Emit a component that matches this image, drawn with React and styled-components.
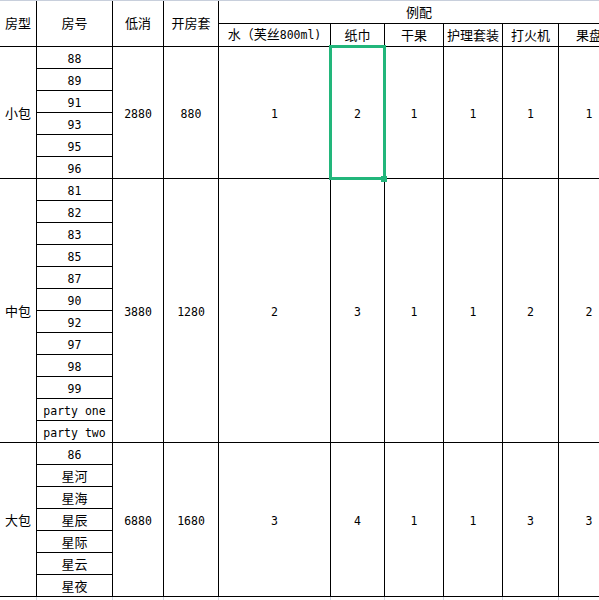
import React from 'react';
import styled, { createGlobalStyle } from 'styled-components';

const GlobalStyle = createGlobalStyle`
  html, body { margin: 0; padding: 0; background: #fff; overflow: hidden; }
  body { width: 599px; height: 600px; }
`;

const COLS = '36px 75px 50px 54px 111px 53px 58px 58px 55px 60px';
const GREEN = '#22b67b';

const Sheet = styled.div`
  border-top: 1px solid #c8cfdc;
  width: max-content;
`;

const Grid = styled.div`
  display: grid;
  grid-template-columns: ${COLS};
  grid-template-rows: 22px 22px repeat(25, 21px);
  gap: 1px;
  background: #000;
  padding-bottom: 1px;
  width: max-content;
`;

const FillerRow = styled.div`
  display: grid;
  grid-template-columns: ${COLS};
  grid-template-rows: 22px;
  column-gap: 1px;
  background: #d3d9e4;
  width: max-content;
`;

const Blank = styled.div`
  background: #fff;
`;

const Cell = styled.div`
  box-sizing: border-box;
  background: #fff;
  display: flex;
  align-items: center;
  justify-content: center;
  padding-top: ${(p) => (p.$head ? 0 : 1)}px;
  padding-bottom: ${(p) => (p.$head ? 1 : 0)}px;
  font-family: "Noto Sans CJK SC", sans-serif;
  font-size: 13px;
  color: #000;
  white-space: nowrap;
  grid-column: ${(p) => p.$col};
  grid-row: ${(p) => p.$row};
`;

const SelectedCell = styled(Cell)`
  position: relative;
  z-index: 1;
  &::before {
    content: '';
    position: absolute;
    left: -2px;
    top: -2px;
    right: -2px;
    bottom: -2px;
    border: 3px solid ${GREEN};
    pointer-events: none;
  }
  &::after {
    content: '';
    position: absolute;
    right: -3px;
    bottom: -4px;
    width: 6px;
    height: 6px;
    background: ${GREEN};
  }
`;

const Label = styled.span`
  line-height: 1.2;
`;

const Lat = styled.span`
  font-family: "DejaVu Sans Mono", monospace;
  font-size: 11.5px;
`;

const renderText = (s) => (
  <Label>
    {s
      .split(/([\x20-\x7e]+)/)
      .filter(Boolean)
      .map((part, i) =>
        /^[\x20-\x7e]+$/.test(part) ? (
          <Lat key={i}>{part}</Lat>
        ) : (
          <React.Fragment key={i}>{part}</React.Fragment>
        )
      )}
  </Label>
);

const itemHeads = ['水（芙丝800ml)', '纸巾', '干果', '护理套装', '打火机', '果盘'];

const groups = [
  {
    name: '小包',
    rooms: ['88', '89', '91', '93', '95', '96'],
    min: '2880',
    open: '880',
    items: ['1', '2', '1', '1', '1', '1'],
    selected: 1,
  },
  {
    name: '中包',
    rooms: ['81', '82', '83', '85', '87', '90', '92', '97', '98', '99', 'party one', 'party two'],
    min: '3880',
    open: '1280',
    items: ['2', '3', '1', '1', '2', '2'],
  },
  {
    name: '大包',
    rooms: ['86', '星河', '星海', '星辰', '星际', '星云', '星夜'],
    min: '6880',
    open: '1680',
    items: ['3', '4', '1', '1', '3', '3'],
  },
];

export default function App() {
  let start = 3;
  const body = groups.map((g) => {
    const s = start;
    const n = g.rooms.length;
    start += n;
    const span = `${s} / span ${n}`;
    return (
      <React.Fragment key={g.name}>
        <Cell $col="1" $row={span}>{renderText(g.name)}</Cell>
        {g.rooms.map((r, i) => (
          <Cell key={r} $col="2" $row={`${s + i}`}>{renderText(r)}</Cell>
        ))}
        <Cell $col="3" $row={span}>{renderText(g.min)}</Cell>
        <Cell $col="4" $row={span}>{renderText(g.open)}</Cell>
        {g.items.map((v, i) => {
          const C = g.selected === i ? SelectedCell : Cell;
          return (
            <C key={i} $col={`${5 + i}`} $row={span}>{renderText(v)}</C>
          );
        })}
      </React.Fragment>
    );
  });

  return (
    <>
      <GlobalStyle />
      <Sheet>
        <Grid>
          <Cell $head $col="1" $row="1 / span 2">{renderText('房型')}</Cell>
          <Cell $head $col="2" $row="1 / span 2">{renderText('房号')}</Cell>
          <Cell $head $col="3" $row="1 / span 2">{renderText('低消')}</Cell>
          <Cell $head $col="4" $row="1 / span 2">{renderText('开房套')}</Cell>
          <Cell $head $col="5 / span 6" $row="1">{renderText('例配')}</Cell>
          {itemHeads.map((h, i) => (
            <Cell key={h} $head $col={`${5 + i}`} $row="2">{renderText(h)}</Cell>
          ))}
          {body}
        </Grid>
        <FillerRow>
          {Array.from({ length: 10 }).map((_, i) => (
            <Blank key={i} />
          ))}
        </FillerRow>
      </Sheet>
    </>
  );
}
